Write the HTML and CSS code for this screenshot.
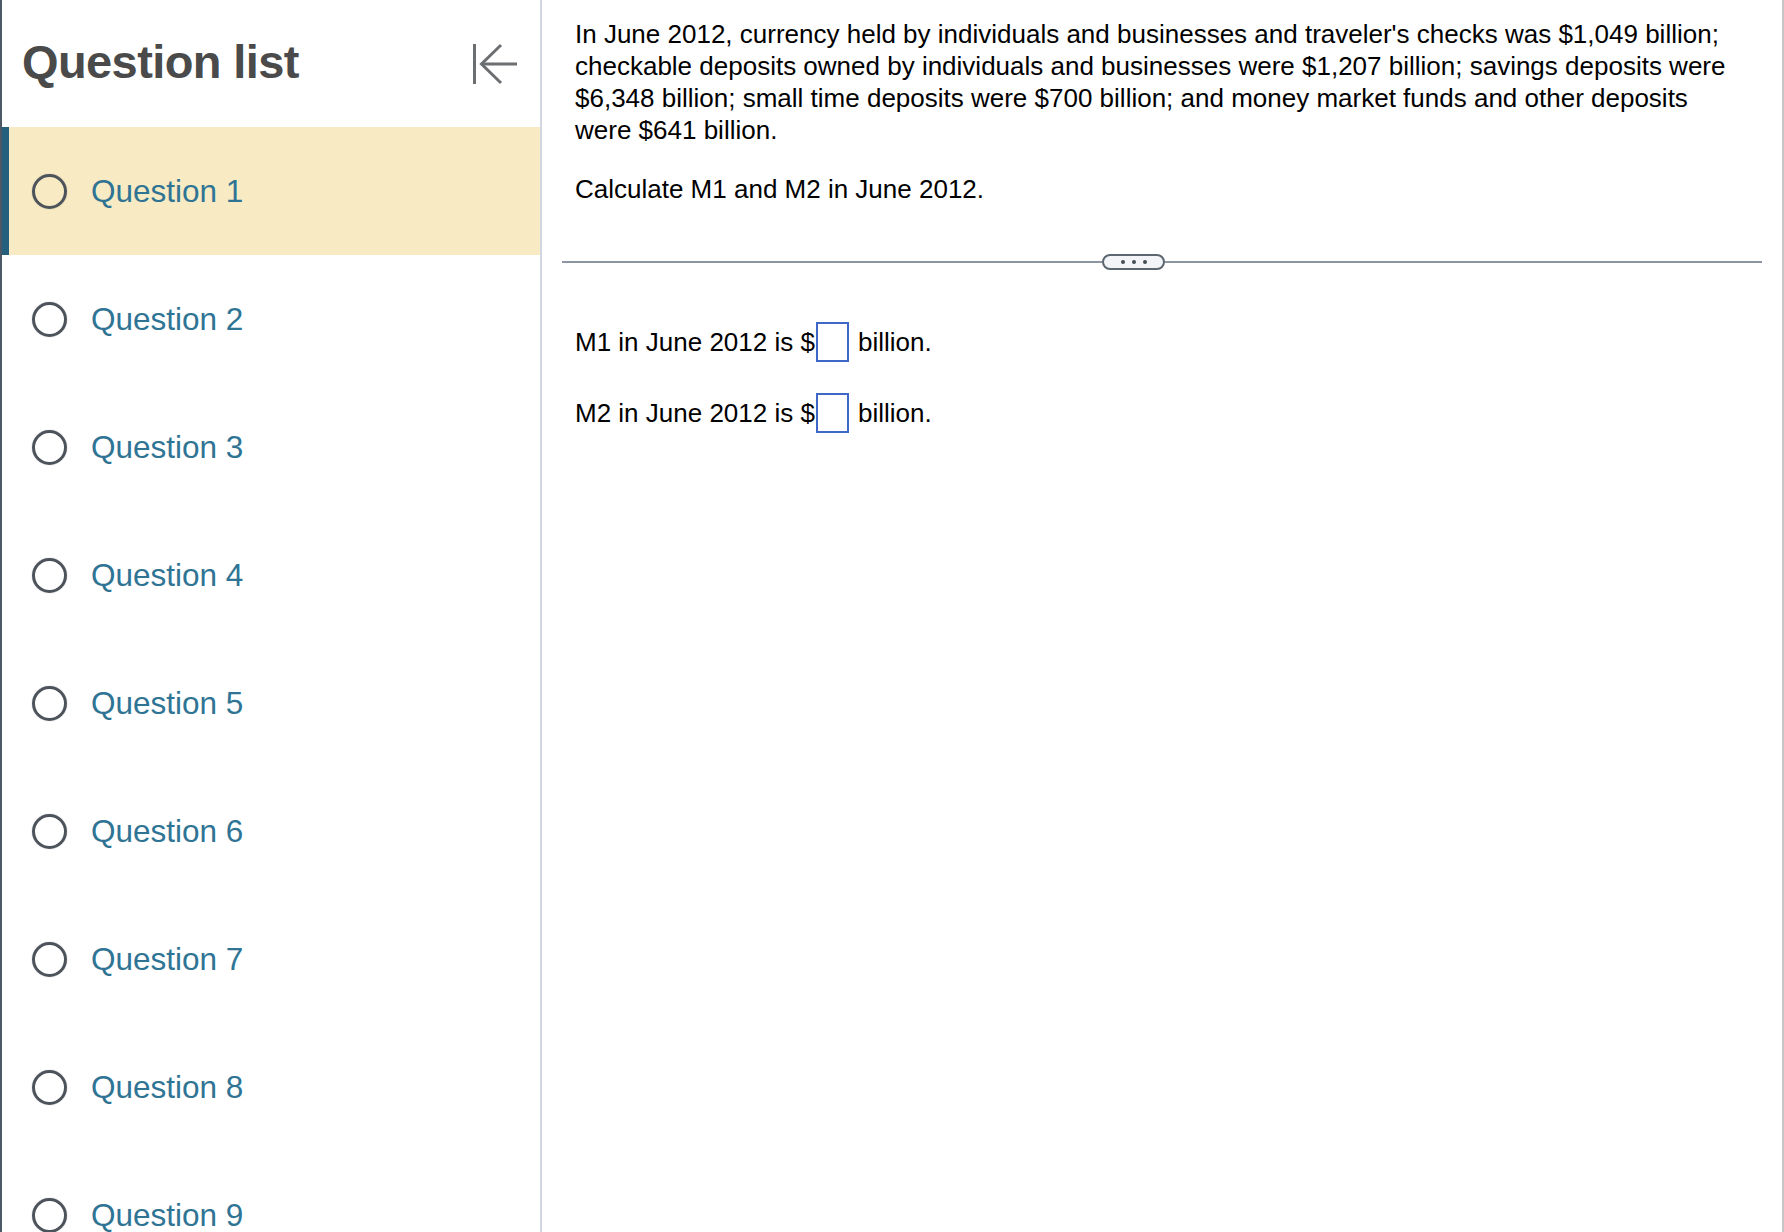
FILE: index.html
```html
<!DOCTYPE html>
<html lang="en">
<head>
<meta charset="utf-8">
<title>Question list</title>
<link rel="stylesheet" href="styles.css">
</head>
<body>
<div class="app">
  <aside class="sidebar">
    <header class="sidebar-header">
      <h1 class="sidebar-title">Question list</h1>
      <button class="collapse-btn" aria-label="Collapse question list">
        <svg width="46" height="42" viewBox="0 0 46 42" fill="none" stroke="#6b6f72" stroke-width="3" stroke-linecap="butt">
          <line x1="3.5" y1="1" x2="3.5" y2="41"/>
          <polyline points="30,2 10.5,21 30,40"/>
          <line x1="10.5" y1="21" x2="46" y2="21"/>
        </svg>
      </button>
    </header>
    <ul class="question-list">
      <li class="question-item active"><span class="radio"></span><span class="q-label">Question 1</span></li>
      <li class="question-item"><span class="radio"></span><span class="q-label">Question 2</span></li>
      <li class="question-item"><span class="radio"></span><span class="q-label">Question 3</span></li>
      <li class="question-item"><span class="radio"></span><span class="q-label">Question 4</span></li>
      <li class="question-item"><span class="radio"></span><span class="q-label">Question 5</span></li>
      <li class="question-item"><span class="radio"></span><span class="q-label">Question 6</span></li>
      <li class="question-item"><span class="radio"></span><span class="q-label">Question 7</span></li>
      <li class="question-item"><span class="radio"></span><span class="q-label">Question 8</span></li>
      <li class="question-item"><span class="radio"></span><span class="q-label">Question 9</span></li>
    </ul>
  </aside>
  <main class="content">
    <section class="question-text">
      <p class="intro">In June 2012, currency held by individuals and businesses and traveler's checks was $1,049 billion; checkable deposits owned by individuals and businesses were $1,207 billion; savings deposits were $6,348 billion; small time deposits were $700 billion; and money market funds and other deposits were $641 billion.</p>
      <p class="prompt">Calculate M1 and M2 in June 2012.</p>
    </section>
    <div class="divider">
      <span class="divider-line divider-left"></span>
      <button class="more-btn" aria-label="More"><span class="dot"></span><span class="dot"></span><span class="dot"></span></button>
      <span class="divider-line divider-right"></span>
    </div>
    <section class="answers">
      <div class="answer-row">M1 in June 2012 is $<span class="answer-box"></span><span class="unit">billion.</span></div>
      <div class="answer-row">M2 in June 2012 is $<span class="answer-box"></span><span class="unit">billion.</span></div>
    </section>
  </main>
</div>
</body>
</html>
```

FILE: styles.css
```css
* { box-sizing: border-box; }

html, body {
  margin: 0;
  padding: 0;
  height: 1232px;
  overflow: hidden;
  background: #ffffff;
  font-family: "Liberation Sans", Arial, Helvetica, sans-serif;
}

.app {
  display: flex;
  height: 1232px;
}

.sidebar {
  flex: 0 0 542px;
  border-left: 2px solid #4c5865;
  border-right: 2px solid #d3d7e1;
  background: #ffffff;
  overflow: hidden;
}

.sidebar-header {
  height: 127px;
  display: flex;
  align-items: center;
  justify-content: space-between;
  padding: 0 23px 0 20px;
}

.sidebar-title {
  margin: 0;
  font-size: 47px;
  font-weight: bold;
  letter-spacing: -0.6px;
  color: #4a4a4a;
  line-height: 1;
  padding-bottom: 4px;
}

.collapse-btn {
  border: 0;
  background: transparent;
  padding: 0;
  margin: 0;
  width: 46px;
  height: 42px;
  display: flex;
  cursor: pointer;
}

.question-list {
  list-style: none;
  margin: 0;
  padding: 0;
}

.question-item {
  height: 128px;
  display: flex;
  align-items: center;
  padding-left: 30px;
  gap: 24px;
}

.question-item.active {
  background: #f8ebc4;
  border-left: 7px solid #245f7d;
  padding-left: 23px;
}

.radio {
  width: 35px;
  height: 35px;
  border: 3px solid #4d535a;
  border-radius: 50%;
  flex: 0 0 35px;
  box-shadow: 0 0 1px rgba(77, 83, 90, 0.6);
}

.q-label {
  font-size: 31.5px;
  color: #2f7494;
}

.content {
  flex: 1;
  border-right: 2px solid #c6c6c6;
  padding: 18px 20px 0 20px;
  color: #000000;
  font-size: 26px;
  line-height: 32px;
}

.question-text {
  padding: 0 20px 0 13px;
}

.question-text p {
  margin: 0;
}

.question-text .prompt {
  margin-top: 27px;
}

.divider {
  display: flex;
  align-items: center;
  height: 17px;
  margin-top: 48px;
}

.divider-line {
  height: 2px;
  background: #8c95a2;
}

.divider-left {
  flex: 0 0 540px;
}

.divider-right {
  flex: 1;
}

.more-btn {
  width: 63px;
  height: 16px;
  border: 2px solid #5b6670;
  border-radius: 8px;
  background: #f2f4f7;
  display: flex;
  align-items: center;
  justify-content: center;
  gap: 7px;
  padding: 0;
  margin: 0;
}

.dot {
  width: 4px;
  height: 4px;
  border-radius: 50%;
  background: #454c53;
}

.answers {
  padding-left: 13px;
  margin-top: 52px;
}

.answer-row {
  display: flex;
  align-items: center;
  height: 40px;
  margin-bottom: 31px;
}

.answer-box {
  display: inline-block;
  width: 33px;
  height: 40px;
  border: 2px solid #3d68c8;
  margin-left: 1px;
  margin-right: 9px;
}
```
